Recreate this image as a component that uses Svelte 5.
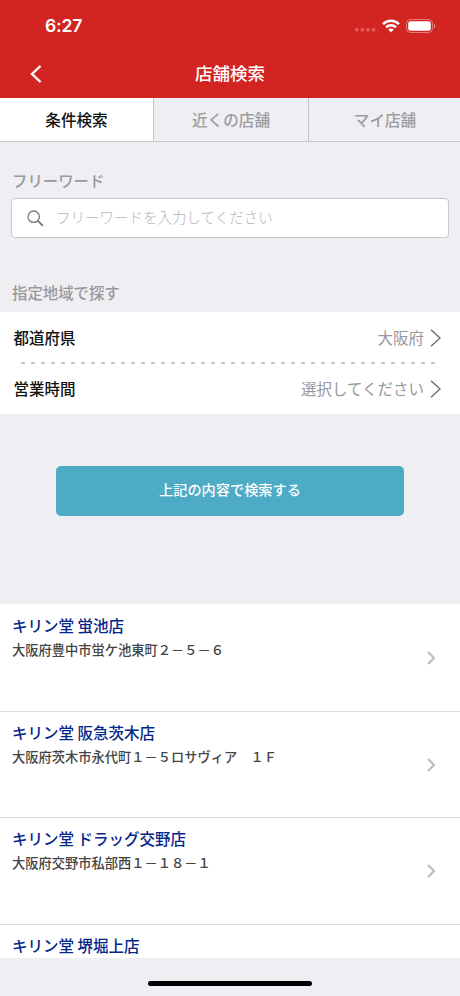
<script lang="ts">
	const tabs = ['条件検索', '近くの店舗', 'マイ店舗'];
	let active = 0;
	let keyword = '';

	const filters = [
		{label: '都道府県', value: '大阪府'},
		{label: '営業時間', value: '選択してください'}
	];

	const shops = [
		{name: 'キリン堂 蛍池店', address: '大阪府豊中市蛍ケ池東町２－５－６'},
		{name: 'キリン堂 阪急茨木店', address: '大阪府茨木市永代町１－５ロサヴィア　１Ｆ'},
		{name: 'キリン堂 ドラッグ交野店', address: '大阪府交野市私部西１－１８－１'},
		{name: 'キリン堂 堺堀上店', address: ''}
	];
</script>

<main>
	<header>
		<div class="status">
			<span class="time">6:27</span>
			<div class="signals">
				<svg class="dots" width="21" height="4" viewBox="0 0 21 4" fill="#fff" fill-opacity=".27">
					<rect x="0" y="0" width="3.5" height="3.6" rx="1" />
					<rect x="5.6" y="0" width="3.5" height="3.6" rx="1" />
					<rect x="11.2" y="0" width="3.5" height="3.6" rx="1" />
					<rect x="16.8" y="0" width="3.5" height="3.6" rx="1" />
				</svg>
				<svg class="wifi" width="18" height="14" viewBox="0 0 18 14" fill="none" stroke="#fff" stroke-width="2.5">
					<path d="M1 5.1C5.5.6 12.5.6 17 5.1" />
					<path d="M4 8.3C6.8 5.5 11.2 5.5 14 8.3" />
					<path d="M6.2 10.5C7.8 9 10.2 9 11.8 10.5L9 13.4Z" fill="#fff" stroke="none" />
				</svg>
				<svg class="battery" width="30" height="14" viewBox="0 0 30 14">
					<rect x=".5" y=".5" width="26" height="13" rx="4" fill="none" stroke="#fff" stroke-opacity=".4" />
					<rect x="2.2" y="2.2" width="22.6" height="9.6" rx="2.4" fill="#fff" />
					<path d="M28 4.7c1.6.7 1.6 3.9 0 4.6z" fill="#fff" fill-opacity=".5" />
				</svg>
			</div>
		</div>
		<nav>
			<svg class="back" width="12" height="18" viewBox="0 0 12 18" fill="none" stroke="#fff" stroke-width="2.4">
				<path d="M10.5 1L2 9l8.5 8" />
			</svg>
			<h1>店舗検索</h1>
		</nav>
	</header>

	<div class="tabs">
		{#each tabs as tab, i}
			<button class="tab" class:active={active === i} on:click={() => active = i}>{tab}</button>
		{/each}
	</div>

	<section class="search">
		<h2>フリーワード</h2>
		<label class="box">
			<svg width="17" height="17" viewBox="0 0 17 17" fill="none" stroke="#77777a">
				<circle cx="6.7" cy="6.7" r="5.7" stroke-width="1.3" />
				<path d="M10.9 10.9l5 5" stroke-width="1.9" />
			</svg>
			<input type="text" placeholder="フリーワードを入力してください" bind:value={keyword} />
		</label>
		<h2 class="area">指定地域で探す</h2>
	</section>

	<div class="filters">
		{#each filters as f}
			<div class="filter">
				<span>{f.label}</span>
				<span class="value">{f.value}</span>
				<svg width="11" height="18" viewBox="0 0 11 18" fill="none" stroke="#6f6f72" stroke-width="1.4">
					<path d="M1 .8L10 9l-9 8.2" />
				</svg>
			</div>
		{/each}
		<svg class="dotline" width="416" height="2">
			<line x1="0" y1="1" x2="416" y2="1" stroke="#c8c8ca" stroke-width="2" stroke-dasharray="4 6" />
		</svg>
	</div>

	<button class="submit">上記の内容で検索する</button>

	<div class="shops">
		{#each shops as shop}
			<div class="shop">
				<div>
					<h3>{shop.name}</h3>
					<p>{shop.address}</p>
				</div>
				<svg width="9" height="14" viewBox="0 0 9 14" fill="none" stroke="#bdbdbf" stroke-width="2.2">
					<path d="M1 1l6 6-6 6" />
				</svg>
			</div>
		{/each}
	</div>

	<footer><div class="home"></div></footer>
</main>

<style>
	:global(body) {
		background: #efeef3;
	}

	main {
		display: flex;
		flex-direction: column;
		width: 460px;
		height: 996px;
		overflow: hidden;
		background: #efeef3;
		font-family: "Noto Sans CJK JP", sans-serif;
		font-weight: 500;
	}

	h1, h2, h3, p {
		margin: 0;
		font-weight: 500;
	}

	svg {
		display: block;
		flex: none;
	}

	button {
		font: inherit;
		border: 0;
		padding: 0;
	}

	header {
		height: 98px;
		flex: none;
		background: #d22421;
		color: #fff;
	}

	.status {
		display: flex;
		justify-content: space-between;
		align-items: center;
		height: 51px;
		padding: 0 24px 0 45px;
	}

	.time {
		font: 600 17.6px Inter, sans-serif;
		letter-spacing: -.2px;
	}

	.signals {
		display: flex;
		align-items: center;
	}

	.dots {
		margin: 9px 6px 0 0;
	}

	.wifi {
		margin-right: 6px;
	}

	nav {
		display: grid;
		grid-template-columns: 60px 1fr 60px;
		align-items: center;
		height: 45px;
	}

	.back {
		margin-left: 30px;
	}

	h1 {
		padding-bottom: 2px;
		font-size: 17.5px;
		line-height: 24px;
		text-align: center;
	}

	.tabs {
		display: grid;
		grid-template-columns: 153px 155px 152px;
		height: 44px;
		flex: none;
		box-sizing: border-box;
		border-bottom: 1px solid #c9c9cb;
	}

	.tab {
		padding-bottom: 1px;
		background: #efeef3;
		color: #9d9d9f;
		font-size: 15.6px;
		border-left: 1px solid #c4c4c6;
	}

	.tab:first-child {
		border-left: 0;
	}

	.tab:last-child {
		padding-left: 1px;
	}

	.tab.active {
		background: #fff;
		color: #111;
	}

	.search {
		height: 170px;
		flex: none;
		box-sizing: border-box;
		padding: 26px 11px 0;
	}

	h2 {
		padding-left: 1px;
		font-size: 15.4px;
		line-height: 24px;
		color: #99999c;
	}

	.box {
		display: flex;
		align-items: center;
		height: 40px;
		box-sizing: border-box;
		margin: 6px 0 42px;
		padding-left: 15px;
		background: #fff;
		border: 1px solid #c8c8ca;
		border-radius: 4px;
	}

	input {
		flex: 1;
		margin-left: 12px;
		padding: 0 0 3px;
		border: 0;
		outline: 0;
		background: none;
		font: 300 14.5px "Noto Sans CJK JP", sans-serif;
	}

	input::placeholder {
		color: #b5b5b8;
	}

	.filters {
		position: relative;
		height: 102px;
		flex: none;
		background: #fff;
	}

	.filter {
		display: flex;
		align-items: center;
		height: 51px;
		padding: 0 19px 0 13.5px;
		font-size: 15.5px;
		color: #111;
	}

	.filter span {
		padding-bottom: 2px;
	}

	.filter .value {
		margin: 0 6px 0 auto;
		font-weight: 400;
		color: #98989a;
	}

	.dotline {
		position: absolute;
		top: 50px;
		left: 21px;
	}

	.submit {
		width: 348px;
		height: 50px;
		flex: none;
		margin: 52px auto 88px;
		padding-bottom: 4px;
		border-radius: 5px;
		background: #4dabc5;
		color: #fff;
		font-size: 14.2px;
	}

	.shops {
		height: 354px;
		flex: none;
		box-sizing: border-box;
		padding-top: 1px;
		overflow: hidden;
		background: #fff;
	}

	.shop {
		display: flex;
		justify-content: space-between;
		align-items: center;
		height: 106.7px;
		box-sizing: border-box;
		padding: 0 24px 0 12px;
		border-bottom: 1px solid #dcdcde;
	}

	.shop > div {
		align-self: flex-start;
		padding-top: 8px;
	}

	h3 {
		font-size: 15.5px;
		line-height: 25px;
		color: #06278a;
	}

	p {
		font-size: 13.25px;
		line-height: 24px;
		color: #444;
	}

	footer {
		display: flex;
		justify-content: center;
		padding-top: 23px;
	}

	.home {
		width: 164px;
		height: 5px;
		border-radius: 3px;
		background: #000;
	}
</style>
